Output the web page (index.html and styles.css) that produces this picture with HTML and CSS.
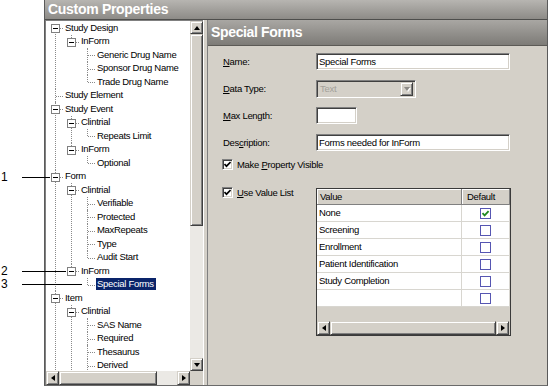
FILE: index.html
```html
<!DOCTYPE html>
<html lang="en">

<head>
    <meta charset="UTF-8">
    <meta name="viewport" content="width=device-width, initial-scale=1.0">
    <title>Custom Properties</title>
    <link rel="stylesheet" href="styles.css">
</head>

<body>

    <div class="figure">
        <!-- callouts -->
        <div class="callout callout-1"><span>1</span></div>
        <div class="callout callout-2"><span>2</span></div>
        <div class="callout callout-3"><span>3</span></div>

        <div class="window">
            <div class="titlebar">Custom Properties</div>

            <div class="main">
                <div class="tree-pane">
                    <div class="tree-view">
                        <ul class="tree">
                            <li>
                                <div class="node"><span class="box"></span><span class="label">Study Design</span></div>
                                <ul>
                                    <li>
                                        <div class="node"><span class="box"></span><span class="label">InForm</span></div>
                                        <ul>
                                            <li><div class="node"><span class="label">Generic Drug Name</span></div></li>
                                            <li><div class="node"><span class="label">Sponsor Drug Name</span></div></li>
                                            <li><div class="node"><span class="label">Trade Drug Name</span></div></li>
                                        </ul>
                                    </li>
                                </ul>
                            </li>
                            <li><div class="node"><span class="label">Study Element</span></div></li>
                            <li>
                                <div class="node"><span class="box"></span><span class="label">Study Event</span></div>
                                <ul>
                                    <li>
                                        <div class="node"><span class="box"></span><span class="label">Clintrial</span></div>
                                        <ul>
                                            <li><div class="node"><span class="label">Repeats Limit</span></div></li>
                                        </ul>
                                    </li>
                                    <li>
                                        <div class="node"><span class="box"></span><span class="label">InForm</span></div>
                                        <ul>
                                            <li><div class="node"><span class="label">Optional</span></div></li>
                                        </ul>
                                    </li>
                                </ul>
                            </li>
                            <li>
                                <div class="node"><span class="box"></span><span class="label">Form</span></div>
                                <ul>
                                    <li>
                                        <div class="node"><span class="box"></span><span class="label">Clintrial</span></div>
                                        <ul>
                                            <li><div class="node"><span class="label">Verifiable</span></div></li>
                                            <li><div class="node"><span class="label">Protected</span></div></li>
                                            <li><div class="node"><span class="label">MaxRepeats</span></div></li>
                                            <li><div class="node"><span class="label">Type</span></div></li>
                                            <li><div class="node"><span class="label">Audit Start</span></div></li>
                                        </ul>
                                    </li>
                                    <li>
                                        <div class="node"><span class="box"></span><span class="label">InForm</span></div>
                                        <ul>
                                            <li><div class="node"><span class="label selected">Special Forms</span></div></li>
                                        </ul>
                                    </li>
                                </ul>
                            </li>
                            <li class="more">
                                <div class="node"><span class="box"></span><span class="label">Item</span></div>
                                <ul>
                                    <li class="more">
                                        <div class="node"><span class="box"></span><span class="label">Clintrial</span></div>
                                        <ul>
                                            <li><div class="node"><span class="label">SAS Name</span></div></li>
                                            <li><div class="node"><span class="label">Required</span></div></li>
                                            <li><div class="node"><span class="label">Thesaurus</span></div></li>
                                            <li class="more"><div class="node"><span class="label">Derived</span></div></li>
                                        </ul>
                                    </li>
                                </ul>
                            </li>
                        </ul>
                    </div>

                    <div class="vscroll">
                        <div class="sb-btn arrow-up"></div>
                        <div class="sb-thumb tree-vthumb"></div>
                        <div class="sb-track"></div>
                        <div class="sb-btn arrow-down"></div>
                    </div>
                    <div class="hscroll">
                        <div class="sb-btn arrow-left"></div>
                        <div class="sb-thumb tree-hthumb"></div>
                        <div class="sb-track"></div>
                        <div class="sb-btn arrow-right"></div>
                    </div>
                    <div class="corner"></div>
                </div>

                <div class="splitter"></div>

                <div class="detail">
                    <div class="detail-header">Special Forms</div>

                    <div class="form">
                        <div class="field">
                            <label><u>N</u>ame:</label>
                            <div class="text-input wide">Special Forms</div>
                        </div>
                        <div class="field">
                            <label><u>D</u>ata Type:</label>
                            <div class="select disabled">
                                <span class="select-text">Text</span>
                                <span class="drop-btn"></span>
                            </div>
                        </div>
                        <div class="field">
                            <label><u>M</u>ax Length:</label>
                            <div class="text-input short"></div>
                        </div>
                        <div class="field">
                            <label>Des<u>c</u>ription:</label>
                            <div class="text-input wide">Forms needed for InForm</div>
                        </div>

                        <div class="check-row visible-row">
                            <span class="checkbox checked">
                                <svg width="7" height="7" viewBox="0 0 7 7"><path d="M0.5 3 L2.5 5.2 L6.6 1" stroke="#000" stroke-width="1.7" fill="none"/></svg>
                            </span>
                            <span>Make <u>P</u>roperty Visible</span>
                        </div>

                        <div class="value-row">
                            <div class="check-row list-check">
                                <span class="checkbox checked">
                                    <svg width="7" height="7" viewBox="0 0 7 7"><path d="M0.5 3 L2.5 5.2 L6.6 1" stroke="#000" stroke-width="1.7" fill="none"/></svg>
                                </span>
                                <span><u>U</u>se Value List</span>
                            </div>

                            <div class="grid-view">
                                <div class="grid-head">
                                    <div class="hcell col-value">Value</div>
                                    <div class="hcell col-default">Default</div>
                                </div>
                                <div class="grid-row">
                                    <div class="cell col-value">None</div>
                                    <div class="cell col-default">
                                        <span class="dcheck">
                                            <svg width="9" height="9" viewBox="0 0 9 9"><path d="M1.5 4.2 L3.6 6.4 L7.6 2.2" stroke="#1f8a1f" stroke-width="1.8" fill="none"/></svg>
                                        </span>
                                    </div>
                                </div>
                                <div class="grid-row">
                                    <div class="cell col-value">Screening</div>
                                    <div class="cell col-default"><span class="dcheck"></span></div>
                                </div>
                                <div class="grid-row">
                                    <div class="cell col-value">Enrollment</div>
                                    <div class="cell col-default"><span class="dcheck"></span></div>
                                </div>
                                <div class="grid-row">
                                    <div class="cell col-value">Patient Identification</div>
                                    <div class="cell col-default"><span class="dcheck"></span></div>
                                </div>
                                <div class="grid-row">
                                    <div class="cell col-value">Study Completion</div>
                                    <div class="cell col-default"><span class="dcheck"></span></div>
                                </div>
                                <div class="grid-row">
                                    <div class="cell col-value"></div>
                                    <div class="cell col-default"><span class="dcheck"></span></div>
                                </div>
                                <div class="grid-filler"></div>
                                <div class="grid-scroll">
                                    <div class="sb-btn arrow-left"></div>
                                    <div class="sb-thumb grid-thumb"></div>
                                    <div class="sb-btn arrow-right"></div>
                                </div>
                            </div>
                        </div>
                    </div>
                </div>
            </div>
        </div>
    </div>

</body>

</html>
```

FILE: styles.css
```css
body {
    margin: 0;
    background: #fff;
    font-family: "Liberation Sans", Arial, sans-serif;
    font-size: 9.5px;
    letter-spacing: -0.3px;
    color: #000;
}

.figure {
    position: relative;
    width: 551px;
    height: 389px;
    overflow: hidden;
}

/* numbered callouts on the left, drawn over the window */
.callout {
    position: absolute;
    left: 0;
    height: 12px;
    display: flex;
    align-items: center;
    font-size: 12px;
    letter-spacing: 0;
    z-index: 5;
}

.callout span {
    width: 21px;
    padding-left: 1px;
    line-height: 12px;
}

.callout::after {
    content: "";
    height: 1px;
    background: #000;
}

.callout-1 { top: 171px; }
.callout-1::after { width: 28px; }
.callout-2 { top: 265px; }
.callout-2::after { width: 44px; }
.callout-3 { top: 278px; }
.callout-3::after { width: 60px; }

/* window */
.window {
    margin-left: 44px;
    width: 504px;
    height: 386px;
    box-sizing: border-box;
    border-left: 1px solid #5a5a5a;
    border-right: 1px solid #5a5a5a;
    border-bottom: 1px solid #6a6a6a;
    background: #d4d0c8;
    display: flex;
    flex-direction: column;
}

.titlebar {
    height: 19px;
    border-bottom: 1px solid #4e4e4c;
    background: linear-gradient(#b7b5b1, #8d8b87);
    color: #fff;
    font-size: 14px;
    font-weight: bold;
    letter-spacing: -0.3px;
    line-height: 18px;
    padding-left: 3px;
}

.main {
    flex: 1;
    display: flex;
    min-height: 0;
}

/* left tree pane */
.tree-pane {
    width: 158px;
    box-sizing: border-box;
    border-left: 1px solid #808080;
    border-top: 1px solid #808080;
    display: grid;
    grid-template-columns: 144px 13px;
    grid-template-rows: 350px 14px;
}

.tree-view {
    background: #fff;
    overflow: hidden;
}

.tree,
.tree ul {
    list-style: none;
    margin: 0;
    padding: 0;
}

.tree {
    padding-left: 5px;
}

.tree ul {
    margin-left: 16px;
}

.tree li {
    position: relative;
}

/* vertical line joining siblings */
.tree li::before {
    content: "";
    position: absolute;
    left: 4px;
    top: 0;
    bottom: 0;
    border-left: 1px dotted #8a8a8a;
}

.tree li:last-child::before {
    bottom: auto;
    height: 7px;
}

.tree li.more::before {
    bottom: 0;
    height: auto;
}

.tree > li:first-child::before {
    top: 7px;
}

.node {
    position: relative;
    height: 13.5px;
    display: flex;
    align-items: center;
    padding-left: 13px;
}

/* horizontal connector */
.node::before {
    content: "";
    position: absolute;
    left: 5px;
    top: 7px;
    width: 7px;
    border-top: 1px dotted #8a8a8a;
}

.box {
    position: absolute;
    left: 0;
    top: 3px;
    width: 9px;
    height: 9px;
    box-sizing: border-box;
    border: 1px solid #808080;
    background: #fff;
    z-index: 1;
}

.box::after {
    content: "";
    position: absolute;
    left: 1px;
    top: 3px;
    width: 5px;
    height: 1px;
    background: #000;
}

.label {
    padding: 0 1px;
    line-height: 12px;
    white-space: nowrap;
}

.label.selected {
    background: #0a246a;
    color: #fff;
    padding: 0 2px 0 1px;
}

/* scrollbars */
.vscroll {
    display: flex;
    flex-direction: column;
}

.hscroll {
    display: flex;
}

.corner {
    background: #d4d0c8;
}

.sb-btn,
.sb-thumb {
    box-sizing: border-box;
    background: #d4d0c8;
    border: 1px solid;
    border-color: #d4d0c8 #404040 #404040 #d4d0c8;
    box-shadow: inset 1px 1px #fff, inset -1px -1px #808080;
}

.sb-btn {
    flex: none;
    display: flex;
    align-items: center;
    justify-content: center;
}

.vscroll .sb-btn {
    height: 13px;
}

.hscroll .sb-btn,
.grid-scroll .sb-btn {
    width: 13px;
}

.sb-track {
    flex: 1;
    background: #ebe9e5;
}

.tree-vthumb {
    height: 192px;
    flex: none;
}

.tree-hthumb {
    width: 98px;
    flex: none;
}

.arrow-up::after,
.arrow-down::after,
.arrow-left::after,
.arrow-right::after {
    content: "";
    width: 0;
    height: 0;
    border: 0 solid transparent;
}

.arrow-up::after {
    border-width: 0 3.5px 4px;
    border-bottom-color: #000;
}

.arrow-down::after {
    border-width: 4px 3.5px 0;
    border-top-color: #000;
}

.arrow-left::after {
    border-width: 3.5px 4px 3.5px 0;
    border-right-color: #000;
}

.arrow-right::after {
    border-width: 3.5px 0 3.5px 4px;
    border-left-color: #000;
}

.splitter {
    width: 5px;
    box-sizing: border-box;
    border-left: 1px solid #fff;
    border-right: 1px solid #808080;
    background: #d4d0c8;
}

/* right detail panel */
.detail {
    flex: 1;
    display: flex;
    flex-direction: column;
}

.detail-header {
    height: 25px;
    border-bottom: 1px solid #5c5a56;
    background: linear-gradient(#a9a7a3, #7d7b77);
    color: #fff;
    font-size: 14px;
    font-weight: bold;
    letter-spacing: -0.35px;
    line-height: 25px;
    padding-left: 3px;
}

.form {
    padding: 7px 0 0 15px;
}

.field {
    display: flex;
    align-items: center;
    height: 17px;
}

.field + .field {
    margin-top: 10px;
}

.field label {
    width: 93px;
    flex: none;
}

.text-input {
    box-sizing: border-box;
    height: 17px;
    background: #fff;
    border: 1px solid;
    border-color: #808080 #fff #fff #808080;
    box-shadow: inset 1px 1px #404040, inset -1px -1px #d4d0c8;
    padding: 0 2px;
    line-height: 15px;
    white-space: nowrap;
}

.wide {
    width: 194px;
}

.short {
    width: 41px;
}

.select {
    box-sizing: border-box;
    width: 100px;
    height: 18px;
    display: flex;
    align-items: center;
    border: 1px solid;
    border-color: #808080 #fff #fff #808080;
    box-shadow: inset 1px 1px #404040, inset -1px -1px #d4d0c8;
    padding: 2px;
    background: #d4d0c8;
}

.select.disabled .select-text {
    color: #a3a09a;
    padding-left: 1px;
}

.drop-btn {
    margin-left: auto;
    width: 13px;
    height: 14px;
    box-sizing: border-box;
    background: #d4d0c8;
    border: 1px solid;
    border-color: #d4d0c8 #404040 #404040 #d4d0c8;
    box-shadow: inset 1px 1px #fff, inset -1px -1px #808080;
    display: flex;
    align-items: center;
    justify-content: center;
}

.drop-btn::after {
    content: "";
    border-style: solid;
    border-width: 4px 3.5px 0;
    border-color: #8c8a86 transparent transparent;
    filter: drop-shadow(1px 1px 0 #fff);
}

.check-row {
    display: flex;
    align-items: center;
    gap: 4px;
    margin-left: -1px;
}

.visible-row {
    margin-top: 8px;
}

.checkbox {
    width: 11px;
    height: 11px;
    flex: none;
    box-sizing: border-box;
    border: 1px solid;
    border-color: #808080 #fff #fff #808080;
    box-shadow: inset 1px 1px #404040, inset -1px -1px #d4d0c8;
    background: #fff;
    display: flex;
    align-items: center;
    justify-content: center;
}

.value-row {
    display: flex;
    align-items: flex-start;
    margin-top: 17px;
}

.list-check {
    width: 94px;
    flex: none;
}

/* value list grid */
.grid-view {
    width: 195px;
    height: 148px;
    margin-top: 1px;
    box-sizing: border-box;
    border: 1px solid #3a3a3a;
    background: #d4d0c8;
    display: flex;
    flex-direction: column;
}

.grid-head {
    display: flex;
    height: 16px;
    flex: none;
}

.hcell {
    box-sizing: border-box;
    height: 16px;
    line-height: 15px;
    padding-left: 3px;
    border-right: 1px solid #808080;
    border-bottom: 1px solid #808080;
    box-shadow: inset 1px 1px #fff;
}

.hcell.col-default {
    padding-left: 5px;
}

.col-value {
    width: 145px;
    flex: none;
}

.col-default {
    flex: 1;
}

.grid-row {
    display: flex;
    height: 17px;
    flex: none;
    background: #fff;
}

.cell {
    box-sizing: border-box;
    border-right: 1px solid #d8d6d0;
    border-bottom: 1px solid #d8d6d0;
    line-height: 16px;
    padding-left: 2px;
    white-space: nowrap;
}

.cell.col-default {
    display: flex;
    align-items: center;
    justify-content: center;
    padding-left: 0;
}

.dcheck {
    width: 11px;
    height: 11px;
    box-sizing: border-box;
    border: 1px solid #5656b2;
    background: #fff;
    display: flex;
    align-items: center;
    justify-content: center;
}

.grid-filler {
    flex: 1;
}

.grid-scroll {
    height: 14px;
    flex: none;
    display: flex;
    padding-right: 1px;
}

.grid-thumb {
    flex: 1;
}
```
